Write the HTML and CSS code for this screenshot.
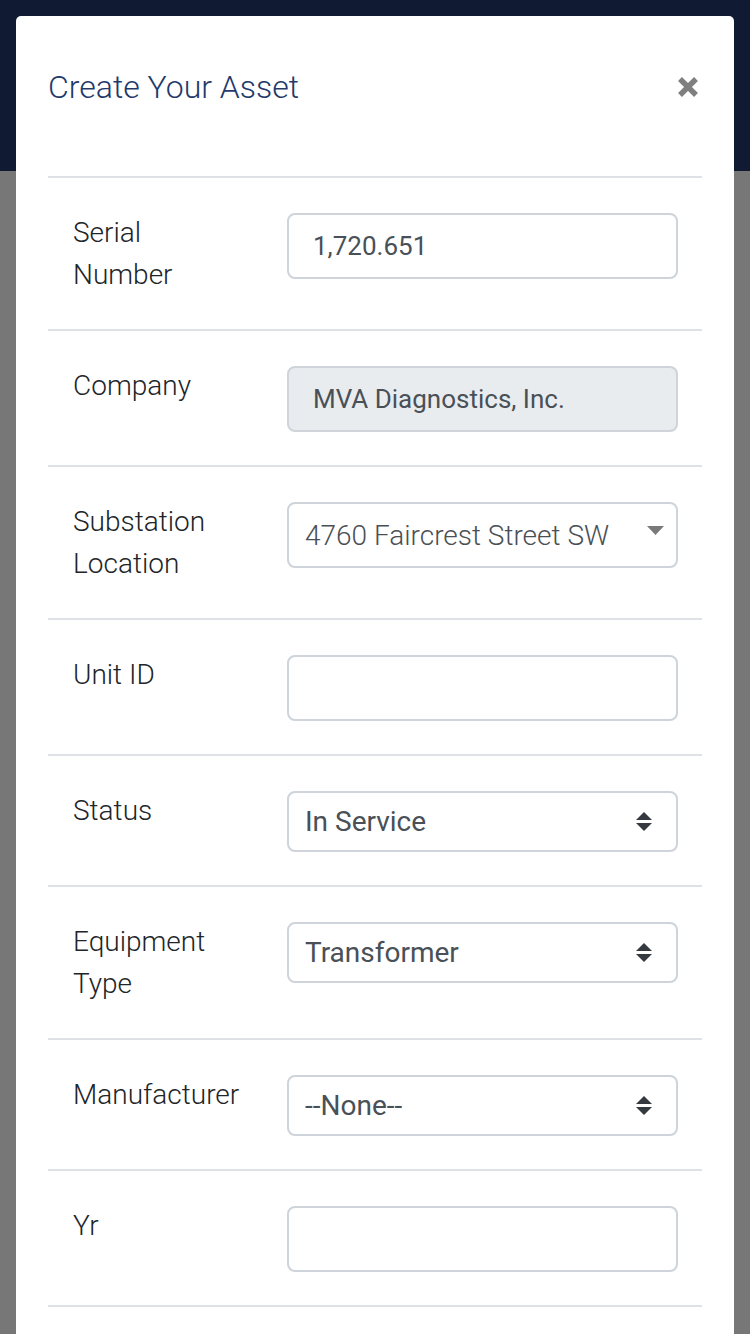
FILE: index.html
```html
<!DOCTYPE html>
<html lang="en">
<head>
<meta charset="utf-8">
<title>Create Your Asset</title>
<link rel="stylesheet" href="styles.css">
</head>
<body>
<div class="page">
  <div class="topbar"></div>
  <div class="backdrop"></div>
  <div class="modal">
    <div class="modal-inner">
      <div class="modal-header">
        <h1 class="modal-title">Create Your Asset</h1>
        <button class="close" aria-label="Close">
          <svg width="22" height="22" viewBox="0 0 22 22"><path d="M3 3 L19 19 M19 3 L3 19" stroke="#7f7f7f" stroke-width="5.5" stroke-linecap="butt" fill="none"/></svg>
        </button>
      </div>
      <form class="form">
        <div class="form-row">
          <label class="label">Serial Number</label>
          <div class="field"><input class="input" type="text" value="1,720.651"></div>
        </div>
        <div class="form-row">
          <label class="label">Company</label>
          <div class="field"><input class="input input-readonly" type="text" value="MVA Diagnostics, Inc." readonly></div>
        </div>
        <div class="form-row">
          <label class="label">Substation Location</label>
          <div class="field">
            <div class="select select-search">
              <span class="select-text">4760 Faircrest Street SW</span>
              <svg class="caret" width="17" height="9" viewBox="0 0 17 9"><path d="M0 0 H17 L8.5 9 Z" fill="#7a7a7a"/></svg>
            </div>
          </div>
        </div>
        <div class="form-row">
          <label class="label">Unit ID</label>
          <div class="field"><input class="input" type="text" value=""></div>
        </div>
        <div class="form-row">
          <label class="label">Status</label>
          <div class="field">
            <div class="select select-custom">
              <span class="select-text">In Service</span>
              <svg class="updown" width="16" height="19" viewBox="0 0 16 19"><path d="M8 0 L16 8 H0 Z M0 11 H16 L8 19 Z" fill="#343a40"/></svg>
            </div>
          </div>
        </div>
        <div class="form-row">
          <label class="label">Equipment Type</label>
          <div class="field">
            <div class="select select-custom">
              <span class="select-text">Transformer</span>
              <svg class="updown" width="16" height="19" viewBox="0 0 16 19"><path d="M8 0 L16 8 H0 Z M0 11 H16 L8 19 Z" fill="#343a40"/></svg>
            </div>
          </div>
        </div>
        <div class="form-row">
          <label class="label">Manufacturer</label>
          <div class="field">
            <div class="select select-custom">
              <span class="select-text">--None--</span>
              <svg class="updown" width="16" height="19" viewBox="0 0 16 19"><path d="M8 0 L16 8 H0 Z M0 11 H16 L8 19 Z" fill="#343a40"/></svg>
            </div>
          </div>
        </div>
        <div class="form-row">
          <label class="label">Yr</label>
          <div class="field"><input class="input" type="text" value=""></div>
        </div>
      </form>
    </div>
  </div>
</div>
</body>
</html>
```

FILE: styles.css
```css
* { box-sizing: border-box; }

html, body {
  margin: 0;
  padding: 0;
  height: 100%;
  overflow: hidden;
}

body {
  font-family: Roboto, "Liberation Sans", Arial, sans-serif;
  background: #777777;
}

.page {
  position: relative;
  width: 750px;
  height: 1334px;
  overflow: hidden;
  display: flex;
  flex-direction: column;
}

.topbar {
  height: 171px;
  background: #111a33;
  flex: 0 0 auto;
}

.backdrop {
  flex: 1;
  background: #777777;
}

.modal {
  position: absolute;
  top: 16px;
  left: 16px;
  width: 718px;
  height: 1400px;
  background: #ffffff;
  border-radius: 5px;
}

.modal-inner {
  padding: 0 32px;
}

.modal-header {
  display: flex;
  justify-content: space-between;
  align-items: center;
  padding: 48px 3px 66px 0;
  border-bottom: 2px solid #dee2e6;
}

.modal-title {
  margin: 0;
  font-size: 32px;
  line-height: 46px;
  font-weight: 300;
  color: #1f3a6b;
}

.close {
  border: 0;
  background: none;
  padding: 0;
  margin: 0;
  width: 22px;
  height: 22px;
  display: block;
}

.close svg { display: block; }

.form {
  margin: 0;
}

.form-row {
  display: flex;
  align-items: flex-start;
  padding: 34px 24px 33px 25px;
  border-bottom: 2px solid #dee2e6;
}

.label {
  flex: 0 0 166px;
  width: 166px;
  margin-right: 48px;
  font-size: 28px;
  line-height: 42px;
  font-weight: 300;
  color: #212529;
}

.field {
  flex: 1;
  padding-top: 1px;
}

.input {
  display: block;
  width: 100%;
  height: 66px;
  margin: 0;
  padding: 0 24px;
  border: 2px solid #ced4da;
  border-radius: 8px;
  background: #ffffff;
  font-family: Roboto, "Liberation Sans", Arial, sans-serif;
  font-size: 26px;
  color: #495057;
  outline: none;
}

.input-readonly {
  background: #e9ecef;
}

.select {
  position: relative;
  display: flex;
  align-items: center;
  width: 100%;
  border: 2px solid #ced4da;
  border-radius: 8px;
  background: #ffffff;
  padding-left: 16px;
  color: #495057;
  font-size: 28px;
}

.select-text {
  line-height: 36px;
  white-space: nowrap;
}

.select-search {
  height: 66px;
}

.select-search .select-text {
  font-weight: 300;
  color: #4a4f55;
  padding-top: 2px;
}

.caret {
  position: absolute;
  top: 22px;
  right: 12px;
}

.select-custom {
  height: 61px;
}

.updown {
  position: absolute;
  top: 19px;
  right: 24px;
}
```
